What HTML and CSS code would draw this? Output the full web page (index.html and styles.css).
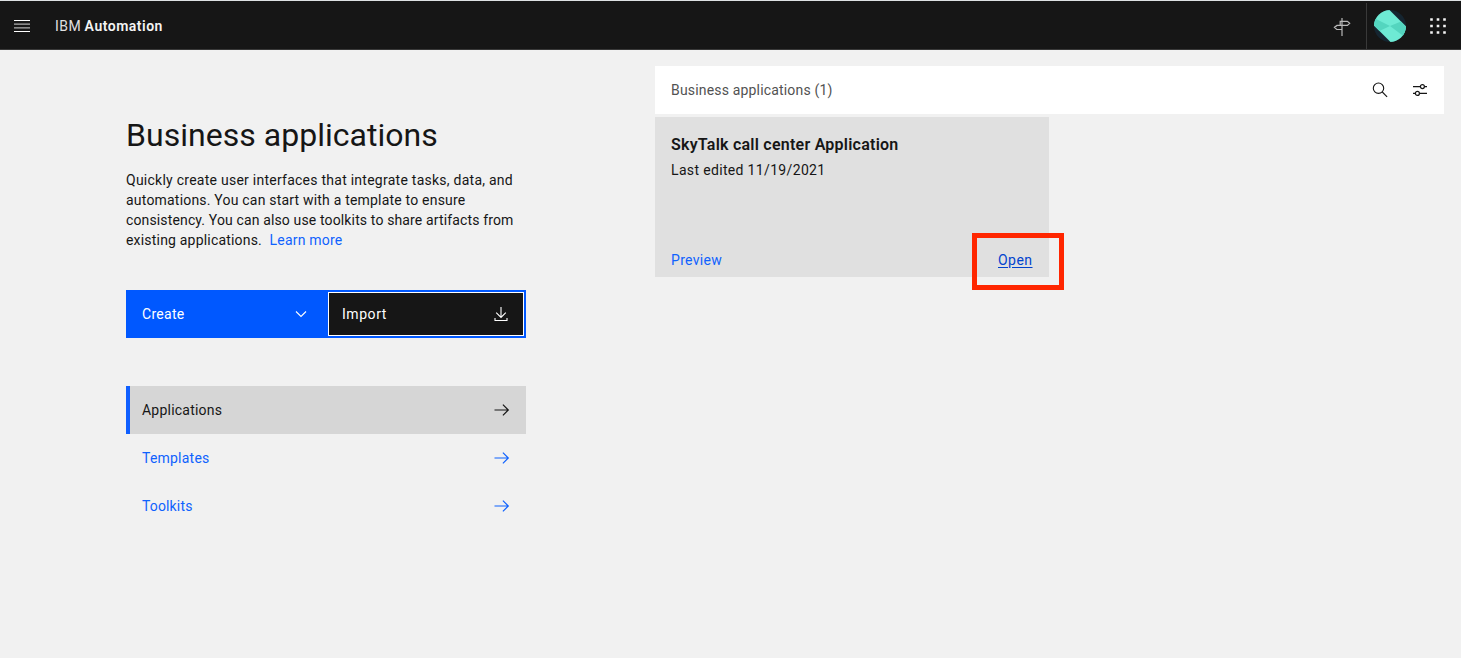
FILE: index.html
```html
<!DOCTYPE html>
<html lang="en">
<head>
<meta charset="utf-8">
<title>Business applications</title>
<link rel="stylesheet" href="styles.css">
</head>
<body>
<header class="header">
  <svg class="menu-icon" width="16" height="12" viewBox="0 0 16 12"><path d="M0 .5h16M0 11.5h16" stroke="#fff"/><path d="M0 4.1h16M0 7.9h16" stroke="#d5d5d5"/></svg>
  <div class="brand"><span class="brand-prefix">IBM</span> <span class="brand-name">Automation</span></div>
  <div class="header-actions">
    <svg class="signpost" width="18" height="18" viewBox="0 0 18 18" fill="none" stroke="#b8b8b8" stroke-width="1.2"><path d="M9 0v18M9 3.300h5.400L16.700 5.300 14.400 7.400H4L1.400 9.400 3.800 11.500H9M9 3.300H7.200v4.100"/></svg>
    <div class="avatar-cell">
      <svg width="32" height="32" viewBox="0 0 32 32"><defs><clipPath id="round"><circle cx="16" cy="16" r="16"/></clipPath></defs><g clip-path="url(#round)"><path fill="#152530" d="M0 0h32v32H0z"/><path fill="#6eead4" d="M0 0h15.500L32 16.500V32H16.500L0 15.500z"/><path fill="#54d5bf" d="M0 8 16 16 5.500 21 0 15.500zM16 16l11-4.500 5 5V28z"/></g></svg>
    </div>
    <svg class="apps" width="16" height="16" viewBox="0 0 16 16" fill="#f4f4f4"><path d="M.2.2h2.600v2.600H.2zM6.700.2h2.600v2.600H6.700zM13.200.2h2.600v2.600h-2.600zM.2 6.700h2.600v2.600H.2zM6.700 6.700h2.600v2.600H6.700zM13.200 6.700h2.600v2.600h-2.600zM.2 13.200h2.600v2.600H.2zM6.700 13.200h2.600v2.600H6.700zM13.200 13.200h2.600v2.600h-2.600z"/></svg>
  </div>
</header>
<main class="main">
  <section class="intro">
    <h1 class="title">Business applications</h1>
    <p class="lead">
      <span class="line line-1">Quickly create user interfaces that integrate tasks, data, and</span>
      <span class="line line-2">automations. You can start with a template to ensure</span>
      <span class="line line-3">consistency. You can also use toolkits to share artifacts from</span>
      <span class="line line-4">existing applications.<a class="learn">Learn more</a></span>
    </p>
    <div class="buttons">
      <div class="create"><span>Create</span><svg width="12" height="8" viewBox="0 0 12 8" fill="none" stroke="#fff" stroke-width="1.1"><path d="m1 1.500 5 5 5-5"/></svg></div>
      <div class="import"><span>Import</span><svg width="14" height="15" viewBox="0 0 14 15" fill="none" stroke="#fff" stroke-width="1.1"><path d="M7 0v10.500M2.200 5.600 7 10.400l4.800-4.800M1 11v2.500h12V11"/></svg></div>
    </div>
    <nav class="nav">
      <a class="nav-item active"><span>Applications</span><svg width="16" height="12" viewBox="0 0 16 12" fill="none" stroke="currentColor" stroke-width="1.200"><path d="M.5 6h14M8.900.600 14.300 6l-5.400 5.400"/></svg></a>
      <a class="nav-item"><span>Templates</span><svg width="16" height="12" viewBox="0 0 16 12" fill="none" stroke="currentColor" stroke-width="1.200"><path d="M.5 6h14M8.900.600 14.300 6l-5.400 5.400"/></svg></a>
      <a class="nav-item"><span class="toolkits-label">Toolkits</span><svg width="16" height="12" viewBox="0 0 16 12" fill="none" stroke="currentColor" stroke-width="1.200"><path d="M.5 6h14M8.900.600 14.300 6l-5.400 5.400"/></svg></a>
    </nav>
  </section>
  <section class="content">
    <div class="toolbar">
      <span class="count">Business applications (1)</span>
      <svg class="search" width="16" height="16" viewBox="0 0 16 16" fill="none" stroke="#161616" stroke-width="1.100"><circle cx="6.500" cy="6.200" r="5.200"/><path d="m10.300 10 4.800 4.800"/></svg>
      <svg class="sliders" width="14" height="12" viewBox="0 0 14 12" fill="none" stroke="#161616" stroke-width="1.200"><path d="M0 2.600h7.300M11.500 2.600H14M0 9.400h2.300M6.500 9.400H14"/><circle cx="9.400" cy="2.600" r="2"/><circle cx="4.400" cy="9.400" r="2"/></svg>
    </div>
    <article class="card">
      <h2 class="card-title">SkyTalk call center Application</h2>
      <p class="card-date">Last edited 11/19/2021</p>
      <div class="card-actions"><a class="preview">Preview</a><a class="open">Open</a></div>
      <div class="highlight"></div>
    </article>
  </section>
</main>
</body>
</html>
```
FILE: styles.css
```css
* { box-sizing: border-box; }
body { margin: 0; height: 658px; overflow: hidden; background: #f1f1f1; color: #161616; font: 14px/20px "Roboto", "Open Sans", sans-serif; letter-spacing: .22px; }
h1, h2, p { margin: 0; }
svg { display: block; flex: none; }

.header { display: flex; align-items: center; height: 50px; padding: 2px 15px 0 14px; background: #161616; border-top: 1px solid #dde1e3; border-bottom: 1px solid #393939; color: #f4f4f4; }
.brand { display: flex; gap: 3.5px; margin-left: 25px; }
.brand-prefix { letter-spacing: .45px; color: #e0e0e0; }
.brand-name { font-weight: 600; letter-spacing: .5px; }
.header-actions { display: flex; align-items: center; margin-left: auto; }
.signpost { margin: 2px 15px 0 0; }
.avatar-cell { display: flex; align-items: center; height: 46px; padding: 0 24px 0 7px; border-left: 1px solid #393939; }

.main { display: flex; gap: 129px; padding: 16px 17px 0 126px; }
.intro { width: 400px; padding-top: 49px; }
.title { font-size: 32px; line-height: 40px; font-weight: 400; letter-spacing: .03px; }
.lead { margin-top: 15px; }
.line { display: block; white-space: nowrap; }
.line-1 { letter-spacing: .253px; }
.line-2 { letter-spacing: .2px; }
.line-3 { letter-spacing: .138px; }
.line-4 { letter-spacing: .193px; }
.learn { margin-left: 7.5px; color: #0f62fe; letter-spacing: .217px; }

.buttons { display: grid; grid-template-columns: 200px 200px; margin-top: 40px; color: #fff; background: #0058ff; }
.create, .import { display: flex; align-items: center; justify-content: space-between; height: 48px; }
.create { padding: 0 19px 0 16px; letter-spacing: .29px; }
.import { height: 44px; margin: 2px; padding: 0 15px 0 13px; background: #161616; border: 1px solid #fff; letter-spacing: .55px; }
.nav { margin-top: 48px; }
.nav-item { display: flex; align-items: center; justify-content: space-between; height: 48px; padding: 0 16px 0 12px; border-left: 4px solid transparent; color: #0f62fe; }
.nav-item.active { background: #d6d6d6; border-left-color: #0f5fff; color: #161616; }
.toolkits-label { letter-spacing: .143px; }

.content { flex: 1; }
.toolbar { display: flex; align-items: center; height: 48px; padding: 0 17px 0 16px; background: #fff; color: #525252; }
.count { letter-spacing: .173px; }
.search { margin-left: auto; }
.sliders { margin-left: 25px; }
.card { position: relative; display: flex; flex-direction: column; width: 394px; height: 160px; margin-top: 3px; padding: 17px 16px 7px; background: #e0e0e0; }
.card-title { font-size: 16px; line-height: 22px; font-weight: 600; letter-spacing: .237px; }
.card-date { margin-top: 4px; letter-spacing: .34px; }
.card-actions { display: flex; justify-content: space-between; margin-top: auto; }
.preview { color: #0f62fe; letter-spacing: .3px; }
.open { margin-right: .5px; color: #0043ce; letter-spacing: .46px; text-decoration: underline; text-underline-offset: 2px; }
.highlight { position: absolute; left: 317px; top: 116px; width: 92px; height: 57px; border: 5px solid #ff2600; }
```
